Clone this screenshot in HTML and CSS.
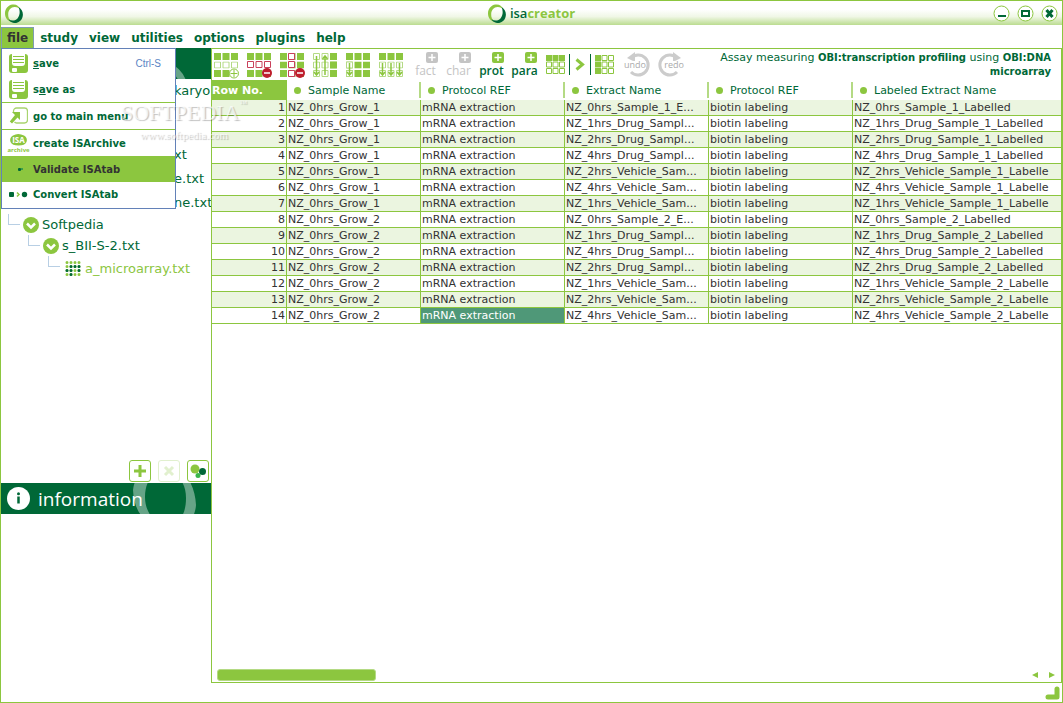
FILE: index.html
```html
<!DOCTYPE html>
<html lang="en">
<head>
    <meta charset="UTF-8" />
    <meta name="viewport" content="width=device-width, initial-scale=1.0" />
    <title>isacreator</title>
    <link rel="stylesheet" href="styles.css">
</head>
<body>
    <!-- Shared icon shapes -->
    <svg class="defs" width="0" height="0" aria-hidden="true">
        <symbol id="logo" viewBox="0 0 18 19">
            <path fill="#8cc63f" d="M15.500 6C14.500 2 11 0 7.500 .6C3 1.200 0 5 0 9.500C0 13.500 2.500 17 6.500 18C4 15.800 3 13 3.200 10C3.400 6 6 3.200 9.500 3C12 2.900 14.300 4 15.500 6Z" />
            <path fill="#006837" d="M13.500 3C17 5 18.600 9 17.600 12.700C16.500 17 12.800 19.400 9 18.900C6.500 18.600 4.500 17.200 3.500 15.200C6.500 17.300 10.500 17 12.700 14.200C15 11.400 15.300 6.500 13.500 3Z" />
        </symbol>
        <symbol id="disk" viewBox="0 0 19 19">
            <rect x="0" y="0" width="19" height="19" rx="3" fill="#8cc63f" />
            <path fill="#fff" d="M3 0h13v9a3 3 0 0 1-3 3H6a3 3 0 0 1-3-3z" />
            <path stroke="#8cc63f" fill="none" d="M4 2.500h11M4 5.500h11M4 8.500h11" />
            <rect x="3" y="14" width="5" height="4" rx="1" fill="#fff" />
        </symbol>
        <symbol id="chevron" viewBox="0 0 16 16">
            <circle cx="8" cy="8" r="8" fill="#8cc63f" />
            <path d="M4 6.500l4 4 4-4" fill="none" stroke="#fff" stroke-width="2.500" />
        </symbol>
        <symbol id="dots" viewBox="0 0 16 15">
            <g fill="none" stroke-width="3" stroke-linecap="round" stroke="#8cc63f">
                <path stroke-dasharray="0 4" d="M2 1.500h13M2 5.500h13M2 9.500h13M2 13.500h13" />
                <path stroke="#006837" stroke-dasharray="0 4" d="M6 5.500h9M2 9.500h5M14 9.500h1M6 13.500h1" />
            </g>
        </symbol>
        <symbol id="full" viewBox="0 0 24 7">
            <path fill="#8cc63f" d="M0 0h7v7H0zM8.500 0h7v7h-7zM17 0h7v7h-7z" />
        </symbol>
        <symbol id="empty" viewBox="0 0 24 7">
            <path fill="none" stroke="#b4da84" d="M.5.5h6v6h-6zM9 .5h6v6H9zM17.500.5h6v6h-6z" />
        </symbol>
        <symbol id="plus" viewBox="0 0 12 11">
            <rect width="12" height="11" rx="2" fill="currentColor" />
            <path d="M6 2v7M2.500 5.500h7" stroke="#fff" stroke-width="1.500" />
        </symbol>
        <symbol id="minus" viewBox="0 0 10 10">
            <circle cx="5" cy="5" r="5" fill="#be1e2d" />
            <path d="M2 5h6" stroke="#fff" stroke-width="1.500" />
        </symbol>
    </svg>

    <div class="window">
        <header class="titlebar">
            <svg class="logo" width="18" height="19"><use href="#logo" /></svg>
            <h1 class="brand"><svg width="18" height="19"><use href="#logo" /></svg><span>isa<b>creator</b></span></h1>
            <div class="window-buttons">
                <button aria-label="Minimize"><svg width="17" height="17"><circle cx="8.500" cy="8.500" r="7.500" /><path d="M5 11h8" /></svg></button>
                <button aria-label="Maximize"><svg width="17" height="17"><circle cx="8.500" cy="8.500" r="7.500" /><path d="M5 6h7v5H5z" /></svg></button>
                <button aria-label="Close"><svg width="17" height="17"><circle cx="8.500" cy="8.500" r="7.500" /><path class="cross" d="M5.500 5l6 7M11.500 5l-6 7" /></svg></button>
            </div>
        </header>

        <nav class="menubar">
            <button class="open">file</button>
            <button>study</button>
            <button>view</button>
            <button>utilities</button>
            <button>options</button>
            <button>plugins</button>
            <button>help</button>
        </nav>

        <div class="workspace">
            <aside class="sidebar">
                <div class="banner">
                    <svg class="ring" width="80" height="31"><circle cx="27" cy="42" r="26" /></svg>
                </div>

                <div class="tree">
                    <!-- rows that run on from under the open menu -->
                    <div class="node behind title">karyo</div>
                    <div class="node behind">xt</div>
                    <div class="node behind">e.txt</div>
                    <div class="node behind">ne.txt</div>
                    <div class="node project"><span class="elbow"></span><svg width="16" height="16"><use href="#chevron" /></svg><span>Softpedia</span></div>
                    <div class="node study"><span class="elbow"></span><svg width="16" height="16"><use href="#chevron" /></svg><span>s_BII-S-2.txt</span></div>
                    <div class="node assay current"><span class="elbow"></span><svg width="16" height="15"><use href="#dots" /></svg><span>a_microarray.txt</span></div>
                </div>

                <div class="tree-buttons">
                    <button aria-label="Add"><svg width="20" height="20"><path d="M10 4v12M4 10h12" stroke="#8cc63f" stroke-width="3" /></svg></button>
                    <button aria-label="Remove" disabled><svg width="20" height="20"><path d="M6 6l8 8M14 6l-8 8" stroke="#8cc63f" stroke-width="3" /></svg></button>
                    <button aria-label="Factors"><svg width="20" height="20"><circle cx="7" cy="8" r="4.500" fill="#8cc63f" /><circle cx="14.500" cy="10.500" r="3.500" fill="#006837" /><circle cx="10" cy="14.500" r="2.500" fill="#39b54a" /></svg></button>
                </div>

                <div class="banner info">
                    <svg width="23" height="23"><circle cx="11.500" cy="11.500" r="11.500" fill="#fff" /><path d="M11.500 9.500v7" fill="none" stroke="#006837" stroke-width="2.500" /><circle cx="11.500" cy="6.800" r="1.500" fill="#006837" /></svg>
                    <h2>information</h2>
                    <svg class="ring" width="80" height="31"><path fill-rule="evenodd" d="M2 7C4-9 14-18 33-18C56-16 64 4 65 22C64 39 50 49 33 46C15 42 3 30 2 7ZM14 14C14-2 22-12 35-12C47-10 55 0 55 15C55 32 48 42 35 42C22 40 14 28 14 14Z" /></svg>
                </div>
            </aside>

            <main class="assay-panel">
                <div class="toolbar">
                    <div class="tools grids">
                        <button aria-label="Add rows"><svg width="27" height="26">
                            <use href="#full" width="24" height="7" /><use href="#empty" y="8.500" width="24" height="7" />
                            <path fill="#8cc63f" d="M0 17h7v7H0zM8.500 17h7v7h-7z" />
                            <circle cx="20" cy="20.500" r="4.500" fill="#fff" stroke="#8cc63f" /><path d="M20 17v7M16.500 20.500h7" stroke="#8cc63f" />
                        </svg></button>
                        <button aria-label="Remove row"><svg width="27" height="26">
                            <use href="#full" width="24" height="7" /><use href="#full" y="17" width="24" height="7" />
                            <path fill="#fff" stroke="#c9405a" d="M.5 8.500h6v6h-6zM9 8.500h6v6H9zM17.500 8.500h6v6h-6z" />
                            <use href="#minus" x="15" y="15" width="10" height="10" />
                        </svg></button>
                        <button aria-label="Remove column"><svg width="27" height="26">
                            <use href="#full" width="24" height="7" /><use href="#full" y="8.500" width="24" height="7" /><use href="#full" y="17" width="24" height="7" />
                            <path fill="#fff" stroke="#c9405a" d="M8.500 .5h6v6h-6zM8.500 8.500h6v6h-6zM8.500 17.500h6v6h-6z" />
                            <use href="#minus" x="15" y="15" width="10" height="10" />
                        </svg></button>
                        <button aria-label="Sort columns"><svg width="27" height="26">
                            <use href="#empty" width="24" height="7" /><use href="#empty" y="8.500" width="24" height="7" /><use href="#empty" y="17" width="24" height="7" />
                            <path fill="#8cc63f" d="M17 0h7v7h-7zM17 8.500h7v7h-7zM17 17h7v7h-7z" />
                            <path fill="none" stroke="#8cc63f" stroke-width="1.500" d="M3.500 3v19M1 19l2.500 3L6 19M12 22V3M9.500 6L12 3l2.500 3" />
                        </svg></button>
                        <button aria-label="Copy column down"><svg width="27" height="26">
                            <use href="#full" width="24" height="7" /><use href="#full" y="8.500" width="24" height="7" /><use href="#full" y="17" width="24" height="7" />
                            <path fill="#fff" stroke="#b4da84" d="M.5 9h6v6h-6zM.5 17.500h6v6h-6z" />
                            <path fill="none" stroke="#8cc63f" stroke-width="1.500" d="M3.500 10v12M1 19l2.500 3L6 19" />
                        </svg></button>
                        <button aria-label="Copy row down"><svg width="27" height="26">
                            <use href="#full" width="24" height="7" /><use href="#empty" y="8.500" width="24" height="7" /><use href="#empty" y="17" width="24" height="7" />
                            <path fill="none" stroke="#8cc63f" stroke-width="1.500" d="M3.500 10v12M1 19l2.500 3L6 19M12 10v12M9.500 19l2.500 3 2.500-3M20.500 10v12M18 19l2.500 3 2.500-3" />
                        </svg></button>
                    </div>
                    <div class="tools fields">
                        <button disabled><svg width="12" height="11"><use href="#plus" /></svg><span>fact</span></button>
                        <button disabled><svg width="12" height="11"><use href="#plus" /></svg><span>char</span></button>
                        <button><svg width="12" height="11"><use href="#plus" /></svg><span>prot</span></button>
                        <button><svg width="12" height="11"><use href="#plus" /></svg><span>para</span></button>
                    </div>
                    <div class="tools views">
                        <button aria-label="Row view"><svg width="19" height="19">
                            <path fill="#8cc63f" d="M0 0h6v6H0zM6.500 0h6v6h-6zM13 0h6v6h-6z" />
                            <path fill="none" stroke="#8cc63f" d="M.5 7h5v5h-5zM7 7h5v5H7zM13.500 7h5v5h-5zM.5 13.500h5v5h-5zM7 13.500h5v5H7zM13.500 13.500h5v5h-5z" />
                        </svg></button>
                        <button class="next" aria-label="Next"><svg width="10" height="13"><path d="M1.500 1.500l6 5-6 5" fill="none" stroke="#8cc63f" stroke-width="3" /></svg></button>
                        <button aria-label="Column view"><svg width="19" height="19">
                            <path fill="#8cc63f" d="M0 0h6v6H0zM0 6.500h6v6H0zM0 13h6v6H0z" />
                            <path fill="none" stroke="#8cc63f" d="M7 .5h5v5H7zM13.500.5h5v5h-5zM7 7h5v5H7zM13.500 7h5v5h-5zM7 13.500h5v5H7zM13.500 13.500h5v5h-5z" />
                        </svg></button>
                    </div>
                    <div class="tools history">
                        <button disabled><svg width="26" height="25"><path d="M7 6A10 10 0 1 1 7 20" /><path class="head" d="M11 0v10L3 6z" /></svg><span>undo</span></button>
                        <button class="redo" disabled><svg width="26" height="25"><path d="M19 6A10 10 0 1 0 19 20" /><path class="head" d="M15 0v10l8-4z" /></svg><span>redo</span></button>
                    </div>
                    <p class="measuring">Assay measuring <b>OBI:transcription profiling</b> using <b>OBI:DNA microarray</b></p>
                </div>

                <div class="sheet">
                    <table>
                        <colgroup>
                            <col class="col-no"><col class="col-sample"><col class="col-field"><col class="col-field"><col class="col-field"><col>
                        </colgroup>
                        <thead>
                            <tr><th class="row-no">Row No.</th><th>Sample Name</th><th>Protocol REF</th><th>Extract Name</th><th>Protocol REF</th><th>Labeled Extract Name</th></tr>
                        </thead>
                        <tbody>
                            <tr><td>1</td><td>NZ_0hrs_Grow_1</td><td>mRNA extraction</td><td>NZ_0hrs_Sample_1_E...</td><td>biotin labeling</td><td>NZ_0hrs_Sample_1_Labelled</td></tr>
                            <tr><td>2</td><td>NZ_0hrs_Grow_1</td><td>mRNA extraction</td><td>NZ_1hrs_Drug_Sampl...</td><td>biotin labeling</td><td>NZ_1hrs_Drug_Sample_1_Labelled</td></tr>
                            <tr><td>3</td><td>NZ_0hrs_Grow_1</td><td>mRNA extraction</td><td>NZ_2hrs_Drug_Sampl...</td><td>biotin labeling</td><td>NZ_2hrs_Drug_Sample_1_Labelled</td></tr>
                            <tr><td>4</td><td>NZ_0hrs_Grow_1</td><td>mRNA extraction</td><td>NZ_4hrs_Drug_Sampl...</td><td>biotin labeling</td><td>NZ_4hrs_Drug_Sample_1_Labelled</td></tr>
                            <tr><td>5</td><td>NZ_0hrs_Grow_1</td><td>mRNA extraction</td><td>NZ_2hrs_Vehicle_Sam...</td><td>biotin labeling</td><td>NZ_2hrs_Vehicle_Sample_1_Labelle</td></tr>
                            <tr><td>6</td><td>NZ_0hrs_Grow_1</td><td>mRNA extraction</td><td>NZ_4hrs_Vehicle_Sam...</td><td>biotin labeling</td><td>NZ_4hrs_Vehicle_Sample_1_Labelle</td></tr>
                            <tr><td>7</td><td>NZ_0hrs_Grow_1</td><td>mRNA extraction</td><td>NZ_1hrs_Vehicle_Sam...</td><td>biotin labeling</td><td>NZ_1hrs_Vehicle_Sample_1_Labelle</td></tr>
                            <tr><td>8</td><td>NZ_0hrs_Grow_2</td><td>mRNA extraction</td><td>NZ_0hrs_Sample_2_E...</td><td>biotin labeling</td><td>NZ_0hrs_Sample_2_Labelled</td></tr>
                            <tr><td>9</td><td>NZ_0hrs_Grow_2</td><td>mRNA extraction</td><td>NZ_1hrs_Drug_Sampl...</td><td>biotin labeling</td><td>NZ_1hrs_Drug_Sample_2_Labelled</td></tr>
                            <tr><td>10</td><td>NZ_0hrs_Grow_2</td><td>mRNA extraction</td><td>NZ_4hrs_Drug_Sampl...</td><td>biotin labeling</td><td>NZ_4hrs_Drug_Sample_2_Labelled</td></tr>
                            <tr><td>11</td><td>NZ_0hrs_Grow_2</td><td>mRNA extraction</td><td>NZ_2hrs_Drug_Sampl...</td><td>biotin labeling</td><td>NZ_2hrs_Drug_Sample_2_Labelled</td></tr>
                            <tr><td>12</td><td>NZ_0hrs_Grow_2</td><td>mRNA extraction</td><td>NZ_1hrs_Vehicle_Sam...</td><td>biotin labeling</td><td>NZ_1hrs_Vehicle_Sample_2_Labelle</td></tr>
                            <tr><td>13</td><td>NZ_0hrs_Grow_2</td><td>mRNA extraction</td><td>NZ_2hrs_Vehicle_Sam...</td><td>biotin labeling</td><td>NZ_2hrs_Vehicle_Sample_2_Labelle</td></tr>
                            <tr><td>14</td><td>NZ_0hrs_Grow_2</td><td class="selected">mRNA extraction</td><td>NZ_4hrs_Vehicle_Sam...</td><td>biotin labeling</td><td>NZ_4hrs_Vehicle_Sample_2_Labelle</td></tr>
                        </tbody>
                    </table>
                </div>

                <div class="scrollbar">
                    <div class="thumb"></div>
                    <button aria-label="Scroll left"><svg width="6" height="6"><path d="M6 0v6L0 3z" /></svg></button>
                    <button aria-label="Scroll right"><svg width="6" height="6"><path d="M0 0v6l6-3z" /></svg></button>
                </div>
            </main>

            <!-- File menu -->
            <div class="file-menu">
                <button><svg width="19" height="19"><use href="#disk" /></svg><span><u>s</u>ave</span><kbd>Ctrl-S</kbd></button>
                <button><svg width="19" height="19"><use href="#disk" /></svg><span>s<u>a</u>ve as</span></button>
                <hr>
                <button><svg width="19" height="19"><path d="M4.500 6V4a3 3 0 0 1 3-3h8a3 3 0 0 1 3 3v9a3 3 0 0 1-3 3h-8a3 3 0 0 1-2-1" fill="none" stroke="#a9d46f" stroke-width="1.300" /><path d="M3 5h8v8L8.500 10.500 3 16.500 .8 14.500l5.200-6.500z" fill="#8cc63f" /></svg><span>go to main menu</span></button>
                <hr>
                <button><svg class="archive" width="19" height="19"><path d="M4 1.500Q9-1.500 15 1.500Q19 4 17.500 8Q16 11.500 9.500 11.500Q3 11.500 1.500 8Q0 4 4 1.500Z" fill="#8cc63f" /><text class="isa" x="9.500" y="9">ISA</text><text class="arc" x="9.500" y="18">archive</text></svg><span>create ISArchive</span></button>
                <hr>
                <button class="hover"><svg width="19" height="19"><rect x="9" y="8" width="3" height="3" rx="1" fill="#006837" /><rect x="12" y="8" width="2" height="2" fill="#39a04a" /></svg><span>Validate ISAtab</span></button>
                <button><svg width="19" height="19"><rect x="0" y="7" width="5" height="5" rx="1" fill="#006837" /><path d="M8 7.500l2 2-2 2" fill="none" stroke="#8cc63f" stroke-width="1.500" /><circle cx="15.500" cy="9.500" r="2.700" fill="#006837" /></svg><span>Convert ISAtab</span></button>
            </div>

            <div class="watermark">
                <p class="mark">SOFTPEDIA<sup>™</sup></p>
                <p class="site">www.softpedia.com</p>
            </div>
        </div>

        <footer class="statusbar">
            <svg width="15" height="14"><path d="M12 3v8H3" fill="none" stroke="#8cc63f" stroke-width="5" stroke-linecap="round" stroke-linejoin="round" /></svg>
        </footer>
    </div>
</body>
</html>
```

FILE: styles.css
```css
* {
    box-sizing: border-box;
}

body {
    margin: 0;
    font-family: "DejaVu Sans", Verdana, sans-serif;
    font-size: 11px;
    color: #006837;
    background: #fff;
}

h1, h2, p {
    margin: 0;
    font-weight: normal;
}

button {
    margin: 0;
    padding: 0;
    border: none;
    background: none;
    font: inherit;
    color: inherit;
}

svg {
    display: block;
    flex: none;
}

.defs {
    position: absolute;
}

.window {
    display: flex;
    flex-direction: column;
    height: 100vh;
    border: 1px solid #8cc63f;
    overflow: hidden;
}

/* Title bar */
.titlebar {
    display: grid;
    grid-template-columns: 1fr auto 1fr;
    align-items: center;
    height: 24px;
    padding: 0 4px;
    background: linear-gradient(#fff 35%, #f0f7e6 65%, #bbdc90);
}

.brand {
    display: flex;
    align-items: center;
    gap: 4px;
    font-family: "Open Sans", sans-serif;
    font-size: 13px;
    font-weight: 600;
    line-height: 20px;
}

.brand b {
    font-weight: 700;
    color: #8cc63f;
}

.window-buttons {
    display: flex;
    justify-content: flex-end;
    gap: 7px;
}

.window-buttons svg {
    fill: none;
    stroke: #006837;
    stroke-width: 2;
}

.window-buttons circle {
    fill: #fff;
    stroke: #8cc63f;
    stroke-width: 1;
}

.window-buttons .cross {
    stroke-width: 3;
}

/* Menu bar */
.menubar {
    display: flex;
    align-items: flex-end;
    gap: 1px;
    height: 23px;
}

.menubar button {
    height: 21px;
    padding: 0 5px;
    font-size: 12px;
    font-weight: bold;
}

.menubar .open {
    border: 1px solid #7f9db0;
    border-bottom: none;
    background: #8cc63f;
    color: #333;
}

.workspace {
    position: relative;
    display: flex;
    flex: 1;
    min-height: 0;
}

/* Sidebar */
.sidebar {
    display: flex;
    flex-direction: column;
    width: 210px;
    flex: none;
    overflow: hidden;
    padding-bottom: 169px;
}

.banner {
    display: flex;
    align-items: center;
    position: relative;
    flex: none;
    height: 31px;
    padding: 0 6px;
    gap: 8px;
    background: #006837;
    color: #fff;
    overflow: hidden;
}

.banner h2 {
    font-family: "Open Sans", sans-serif;
    font-size: 19px;
}

.ring {
    position: absolute;
    right: 0;
    top: 0;
    fill: rgba(255, 255, 255, 0.4);
}

.ring circle {
    fill: none;
    stroke: rgba(255, 255, 255, 0.4);
    stroke-width: 7;
}

.tree {
    flex: 1;
    padding: 1px 0 0 7px;
    font-size: 13px;
    white-space: nowrap;
}

.node {
    display: flex;
    align-items: center;
    height: 24px;
}

.node.project {
    height: 21px;
}

.node.behind {
    padding-left: 166px;
}

.node.title {
    height: 20px;
    margin-bottom: 42px;
}

.node.study {
    height: 21px;
    padding-left: 20px;
}

.node.assay {
    padding-left: 40px;
}

.node.current {
    color: #8cc63f;
}

.node svg {
    margin: 0 3px;
}

.node.assay svg {
    margin: 0 4px 0 5px;
}

.elbow {
    align-self: flex-start;
    width: 12px;
    height: 11px;
    border-left: 1px solid #b8cfe4;
    border-bottom: 1px solid #b8cfe4;
}

.tree-buttons {
    display: flex;
    justify-content: flex-end;
    gap: 7px;
    padding: 0 2px 1px 0;
}

.tree-buttons button {
    border: 1px solid #8cc63f;
    border-radius: 3px;
}

.tree-buttons button:disabled {
    opacity: 0.25;
}

/* Assay panel */
.assay-panel {
    display: flex;
    flex-direction: column;
    flex: 1;
    min-width: 0;
    border: 1px solid #8cc63f;
}

.toolbar {
    display: flex;
    height: 31px;
    padding: 0 10px 0 2px;
}

.tools {
    display: flex;
    align-items: center;
}

.grids {
    gap: 6px;
    padding-top: 2px;
}

.fields {
    gap: 8px;
    margin-left: 7px;
    font-family: "Open Sans", sans-serif;
    font-size: 12px;
    line-height: 15px;
}

.fields button {
    display: flex;
    flex-direction: column;
    align-items: center;
    width: 25px;
}

.fields svg {
    align-self: flex-end;
    color: #8cc63f;
}

.fields button:disabled,
.fields button:disabled svg {
    color: #c4c4c4;
}

.fields span {
    font-weight: 600;
}

.fields button:disabled span {
    font-weight: normal;
}

.views {
    margin-left: 9px;
    gap: 4px;
}

.views .next {
    padding: 4px 5px;
    border-left: 1px solid #006837;
    border-right: 1px solid #006837;
}

.history {
    gap: 8px;
    margin-left: 10px;
}

.history button {
    display: grid;
    align-items: center;
    justify-items: start;
}

.history .redo {
    justify-items: end;
}

.history svg,
.history span {
    grid-area: 1 / 1;
}

.history svg {
    fill: none;
    stroke: #ccc;
    stroke-width: 3;
}

.history .head {
    fill: #ccc;
    stroke: none;
}

.history span {
    font-family: "Open Sans", sans-serif;
    font-size: 9px;
    line-height: 8px;
    background: #fff;
    color: #aaa;
}

.measuring {
    flex: 1;
    padding: 2px 0 0 16px;
    line-height: 14px;
    text-align: right;
}

.measuring b {
    font-size: 10px;
}

/* Spreadsheet */
.sheet {
    flex: 1;
    overflow: hidden;
}

table {
    width: 100%;
    table-layout: fixed;
    border-collapse: separate;
    border-spacing: 0;
    white-space: nowrap;
}

.col-no {
    width: 75px;
}

.col-sample {
    width: 134px;
}

.col-field {
    width: 144px;
}

th {
    height: 20px;
    padding: 0;
    font-weight: normal;
    text-align: left;
    background: linear-gradient(#b4da84, #b4da84) right center / 2px 16px no-repeat;
}

th:last-child {
    background: none;
}

th::before {
    content: "";
    display: inline-block;
    width: 7px;
    height: 7px;
    margin: 0 7px;
    border-radius: 50%;
    background: #8cc63f;
}

th.row-no {
    font-weight: bold;
    color: #fff;
    background: #8cc63f;
}

th.row-no::before {
    display: none;
}

td {
    height: 16px;
    padding: 1px 1px 0;
    border-right: 1px solid #8cc63f;
    border-bottom: 1px solid #8cc63f;
    line-height: 14px;
    color: #333;
    overflow: hidden;
}

td:first-child {
    text-align: right;
}

td:last-child {
    border-right: none;
}

tbody tr:nth-child(odd) {
    background: #ebf5e0;
}

td.selected {
    background: #4f9878;
    color: #fff;
}

.scrollbar {
    display: flex;
    align-items: center;
    gap: 11px;
    height: 14px;
    padding: 0 6px 0 5px;
}

.thumb {
    width: 159px;
    height: 12px;
    margin-right: auto;
    border: 1px solid #b4da84;
    border-radius: 3px;
    background: #8cc63f;
}

.scrollbar svg {
    fill: #8cc63f;
}

/* Drop-down over the sidebar */
.file-menu {
    position: absolute;
    top: 0;
    left: 0;
    width: 175px;
    padding: 1px 0;
    border: 1px solid #6381b8;
    background: #fff;
}

.file-menu button {
    display: flex;
    align-items: center;
    gap: 5px;
    width: 100%;
    height: 26px;
    padding: 0 14px 0 7px;
    font-size: 10px;
    font-weight: bold;
}

.file-menu .hover,
.file-menu .hover + button {
    height: 25px;
}

.file-menu .hover {
    background: #8cc63f;
    color: #333;
}

.file-menu hr {
    margin: 0;
    border: none;
    border-top: 1px solid #8cc63f;
}

.file-menu kbd {
    margin-left: auto;
    font-family: "Liberation Sans", Arial, sans-serif;
    font-weight: normal;
    color: #5b84c4;
}

.archive {
    font-family: "Open Sans", sans-serif;
    font-weight: bold;
    text-anchor: middle;
    overflow: visible;
}

.archive .isa {
    font-size: 8px;
    fill: #fff;
}

.archive .arc {
    font-size: 6px;
    fill: #8cc63f;
}

.watermark {
    position: absolute;
    top: 52px;
    left: 120px;
    color: rgba(255, 255, 255, 0.7);
    font-family: "Liberation Serif", serif;
    text-align: center;
    text-shadow: 1px 1px 1px rgba(0, 0, 0, 0.25);
    pointer-events: none;
}

.watermark .mark {
    font-size: 22px;
    line-height: 26px;
}

.watermark sup {
    font-size: 8px;
    vertical-align: top;
    line-height: 8px;
}

.watermark .site {
    font-size: 11px;
    line-height: 18px;
}

.statusbar {
    display: flex;
    justify-content: flex-end;
    align-items: center;
    height: 19px;
    padding-right: 2px;
}
```
